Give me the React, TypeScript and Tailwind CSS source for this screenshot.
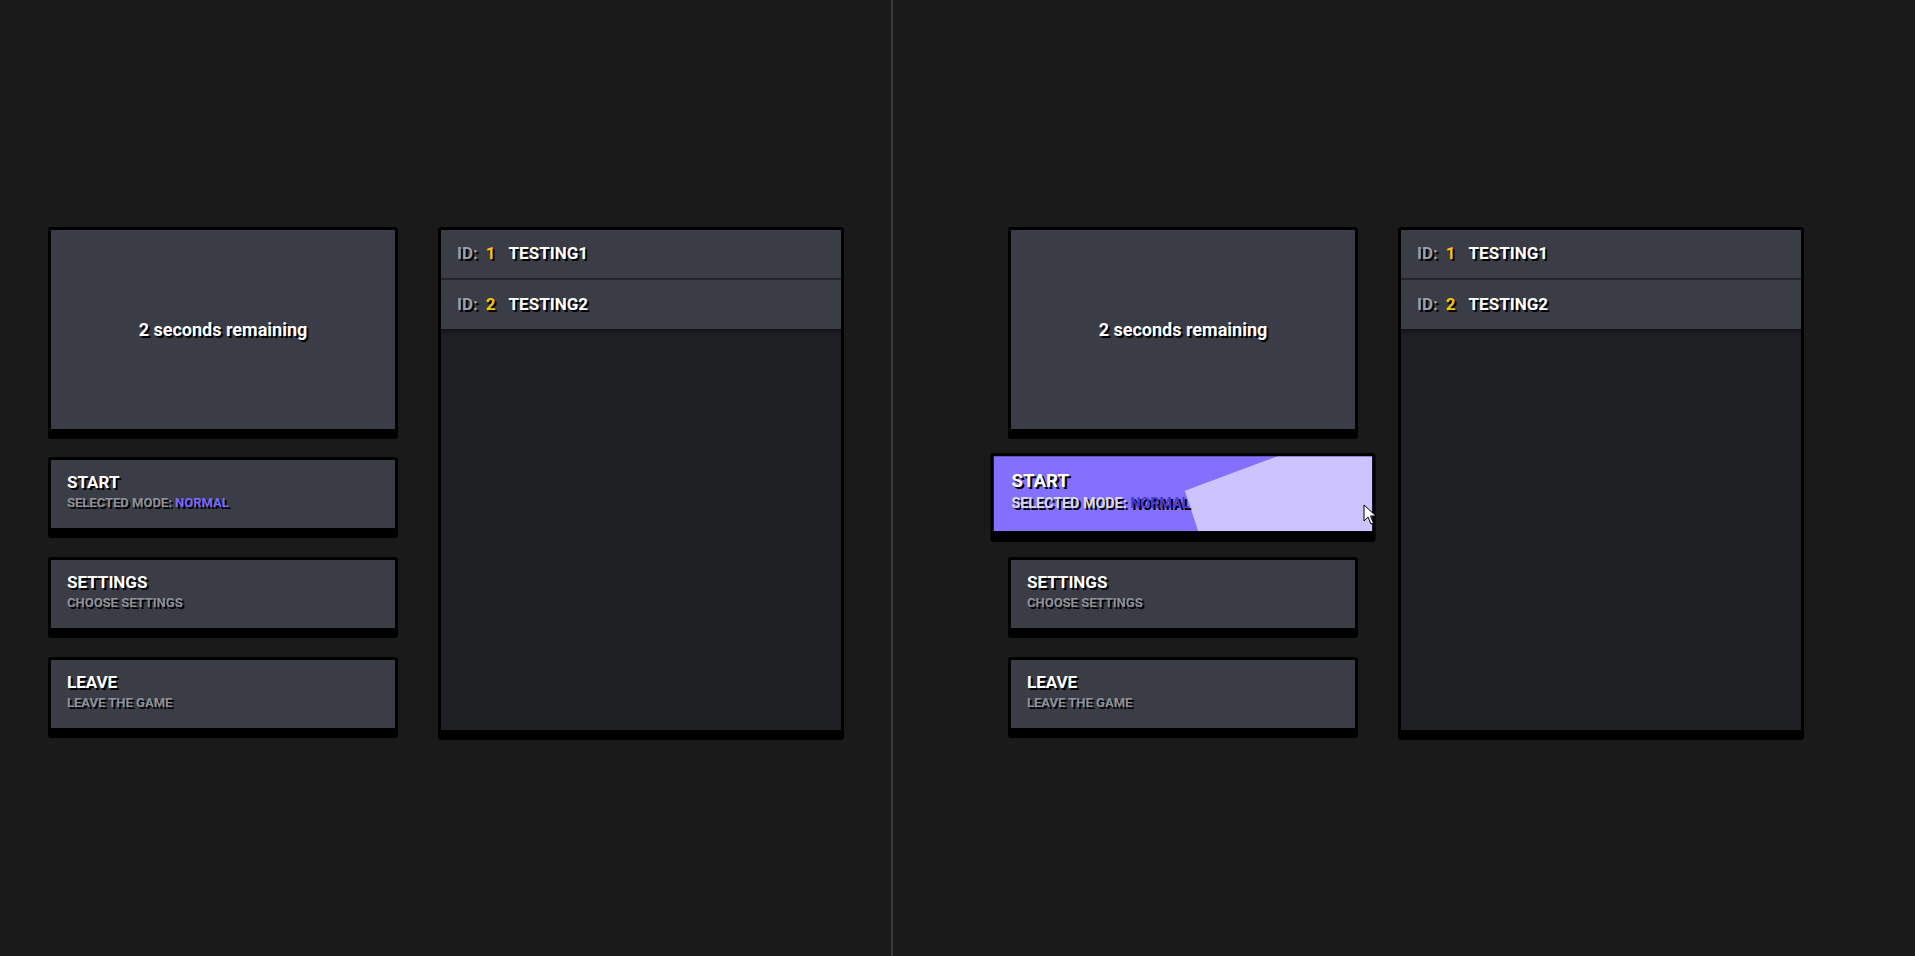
import React from "react"

const font = "font-['Roboto','Liberation_Sans',sans-serif]"
const shadow = "[text-shadow:2px_2px_0_#000]"

const players = [
  { id: 1, name: "TESTING1" },
  { id: 2, name: "TESTING2" },
]

const buttons = [
  { title: "START", sub: "SELECTED MODE: ", mode: "NORMAL" },
  { title: "SETTINGS", sub: "CHOOSE SETTINGS" },
  { title: "LEAVE", sub: "LEAVE THE GAME" },
]

function Card({ children, className = "" }: { children: React.ReactNode; className?: string }) {
  return (
    <div className={`rounded-[3px] bg-black p-[3px] pb-[10px] ${className}`}>
      {children}
    </div>
  )
}

function MenuButton({ title, sub, mode, hovered }: { title: string; sub: string; mode?: string; hovered?: boolean }) {
  return (
    <Card className={hovered ? "scale-110 origin-center" : ""}>
      <div
        className={`relative h-[68px] overflow-hidden px-4 pt-[12px] ${
          hovered ? "bg-[#8470ff]" : "bg-[#3a3d46]"
        }`}
      >
        {hovered && (
          <div className="absolute inset-0 bg-[#cdc4ff] [clip-path:polygon(75%_0,100%_0,100%_100%,54%_100%,50.5%_46%)]" />
        )}
        <div className="relative">
          <div className={`text-[17px] leading-[21px] font-bold text-white ${shadow}`}>{title}</div>
          <div
            className={`mt-[2px] text-[13px] leading-[1.2] font-bold ${shadow} ${
              hovered ? "text-[#dcdae8]" : "text-[#8e909a]"
            }`}
          >
            {sub}
            {mode && <span className={hovered ? "text-[#4a3bd6]" : "text-[#7b68ff]"}>{mode}</span>}
          </div>
        </div>
      </div>
    </Card>
  )
}

function Lobby({ hovered }: { hovered?: boolean }) {
  return (
    <div className={`flex gap-[40px] ${font}`}>
      <div className="flex w-[350px] flex-col">
        <Card>
          <div className="flex h-[199px] items-center justify-center bg-[#3a3d46]">
            <span className={`text-[18px] font-bold text-white ${shadow}`}>2 seconds remaining</span>
          </div>
        </Card>
        <div className="mt-[18px] flex flex-col gap-[19px]">
          {buttons.map((b, i) => (
            <MenuButton key={b.title} title={b.title} sub={b.sub} mode={b.mode} hovered={hovered && i === 0} />
          ))}
        </div>
      </div>

      <Card className="w-[406px]">
        <div className="flex h-[500px] flex-col bg-[#1f2024]">
          {players.map((p, i) => (
            <div
              key={p.id}
              className={`flex items-center bg-[#3a3d46] px-4 text-[17px] font-bold ${shadow} ${
                i === 0 ? "h-[50px] border-b-2 border-[#23252b]" : "h-[49px]"
              }`}
            >
              <span className="text-[#9ba0a8]">ID:</span>
              <span className="ml-[8px] text-[#f7c600]">{p.id}</span>
              <span className="ml-[13px] text-white">{p.name}</span>
            </div>
          ))}
          <div className="h-[7px] bg-gradient-to-b from-black/40 to-transparent" />
        </div>
      </Card>
    </div>
  )
}

export default function App() {
  return (
    <div className="relative flex h-[956px] w-[1915px] overflow-hidden bg-[#1a1a1a]">
      <div className="w-[891px] shrink-0 pl-[48px] pt-[227px]">
        <Lobby />
      </div>
      <div className="w-[2px] shrink-0 bg-[#3b3b3b]" />
      <div className="flex-1 pl-[115px] pt-[227px]">
        <Lobby hovered />
      </div>

      {/* mouse pointer over the hovered START button */}
      <svg className="absolute left-[1363px] top-[504px]" width="14" height="22" viewBox="0 0 14 22">
        <path d="M1 1 L1 17 L5 13 L8 20 L10.5 19 L7.5 12 L13 12 Z" fill="#fff" stroke="#000" strokeWidth="1" strokeLinejoin="round" />
      </svg>
    </div>
  )
}
